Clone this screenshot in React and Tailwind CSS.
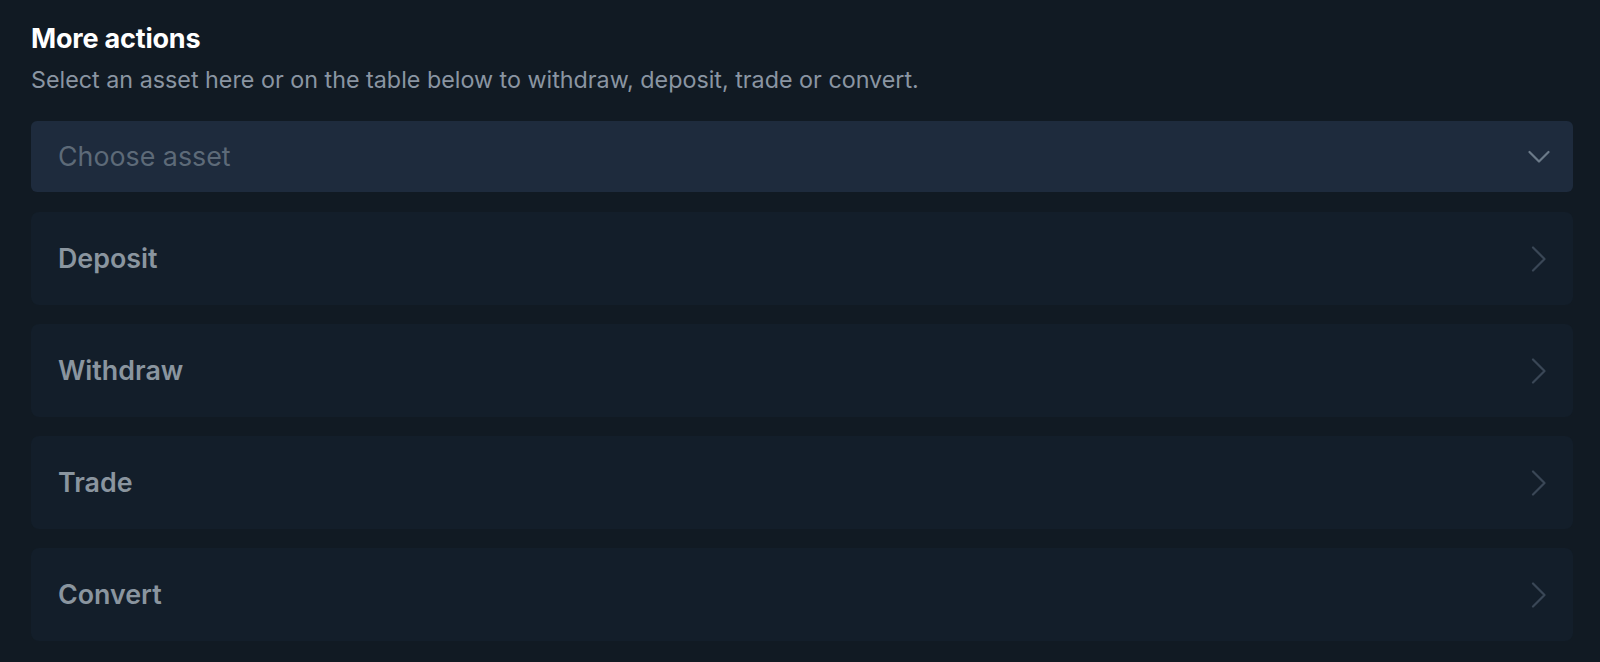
import React from "react";

const Chevron = () => (
  <svg width="16" height="26" viewBox="0 0 16 26" fill="none" className="shrink-0">
    <path d="M2 1.5 L13.5 13 L2 24.5" stroke="#3a4756" strokeWidth="2.2" strokeLinecap="round" strokeLinejoin="round" />
  </svg>
);

const ChevronDown = () => (
  <svg width="22" height="14" viewBox="0 0 22 14" fill="none" className="shrink-0">
    <path d="M1.5 2 L11 11.5 L20.5 2" stroke="#6b7a89" strokeWidth="2.2" strokeLinecap="round" strokeLinejoin="round" />
  </svg>
);

export default function App() {
  const actions = ["Deposit", "Withdraw", "Trade", "Convert"];
  return (
    <div
      className="w-[1600px] h-[662px] bg-[#111a23] pl-[31px] pr-[27px] pt-[22px] overflow-hidden"
      style={{ fontFamily: "Inter, 'Noto Sans', sans-serif" }}
    >
      <h2 className="text-[27px] leading-[34px] font-bold text-white tracking-[-0.2px]">More actions</h2>
      <p className="mt-[8px] text-[23.3px] leading-[32px] text-[#8a95a2]">
        Select an asset here or on the table below to withdraw, deposit, trade or convert.
      </p>
      <div className="mt-[25px] h-[71px] rounded-md bg-[#1e2b3d] flex items-center justify-between pl-[27px] pr-[23px]">
        <span className="text-[26.8px] text-[#5d6a78]">Choose asset</span>
        <ChevronDown />
      </div>
      <div className="mt-[20px] flex flex-col gap-[19px]">
        {actions.map((a) => (
          <div
            key={a}
            className="h-[93px] rounded-lg bg-[#131e2a] flex items-center justify-between pl-[27px] pr-[26px]"
          >
            <span className="text-[26.8px] font-semibold text-[#8a959f]">{a}</span>
            <Chevron />
          </div>
        ))}
      </div>
    </div>
  );
}
